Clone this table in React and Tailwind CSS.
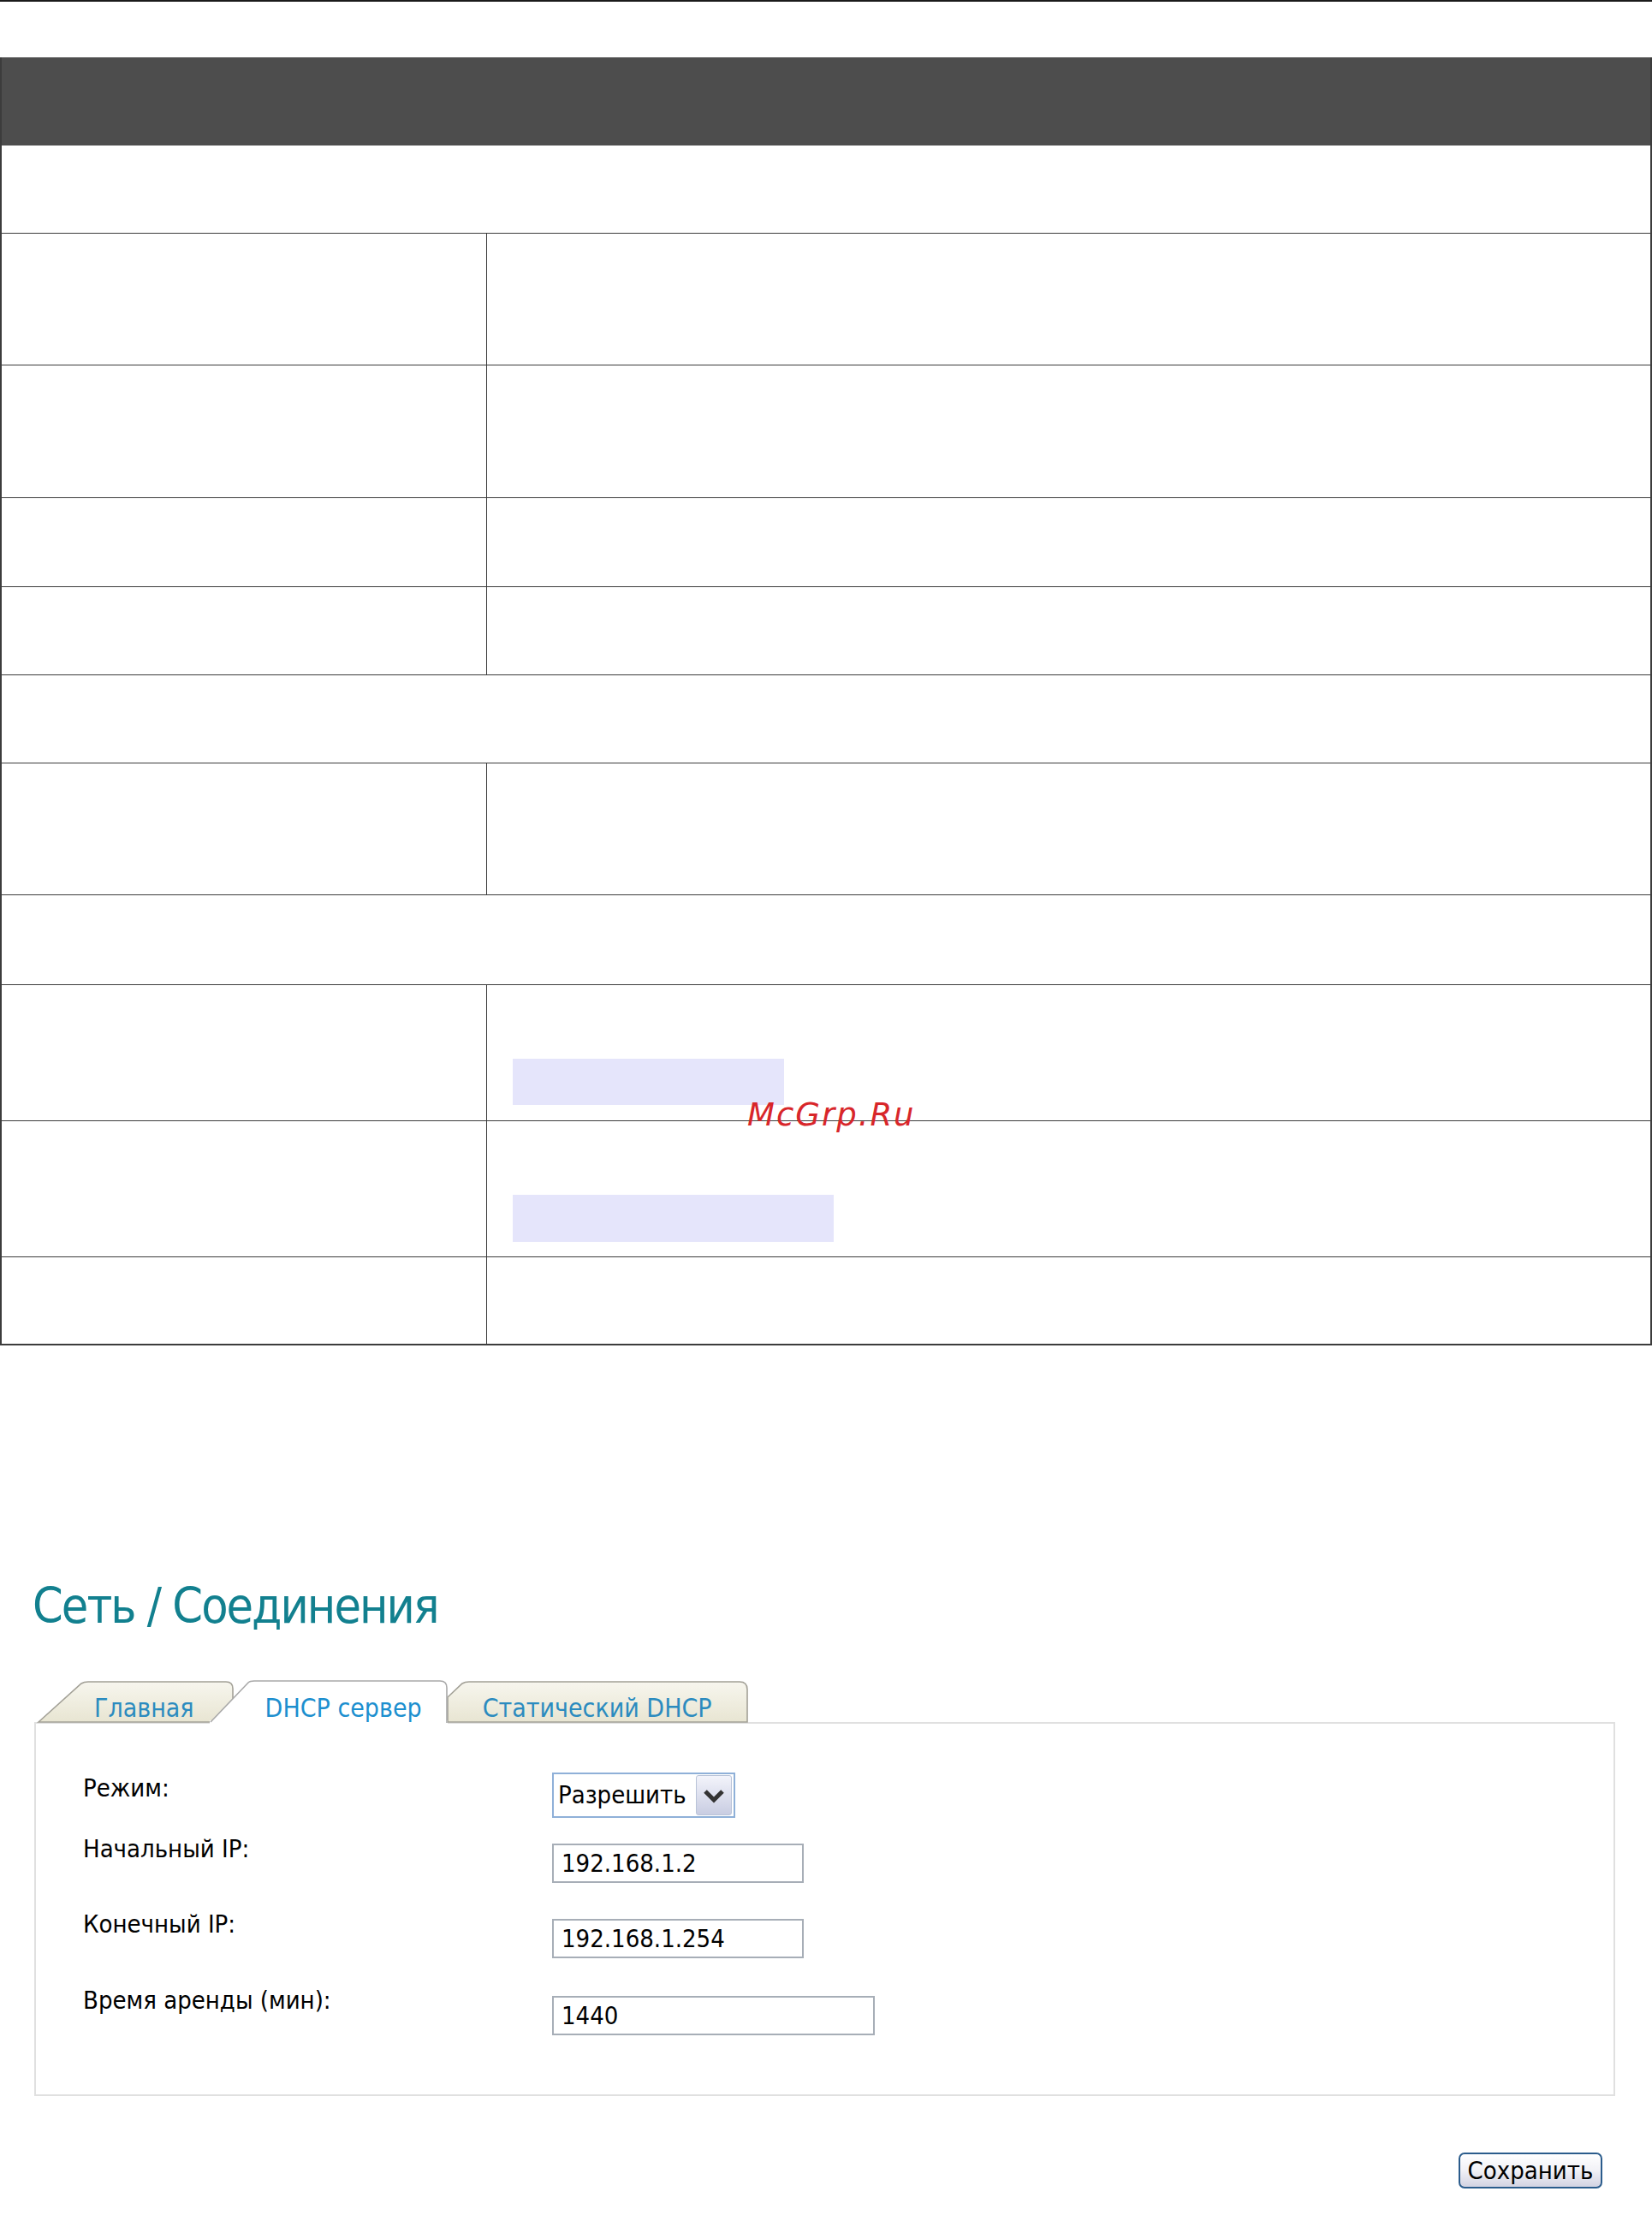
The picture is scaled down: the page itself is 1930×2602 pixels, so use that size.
import React from "react";

const F = { fontFamily: '"DejaVu Sans", "Liberation Sans", sans-serif' };

function Row({ h, split, children }) {
  return (
    <div className={`flex border-t border-[#3c3c3c] ${h}`}>
      {split ? (
        <>
          <div className="w-[567px] shrink-0 border-r border-[#3c3c3c]" />
          <div className="flex-1">{children}</div>
        </>
      ) : (
        <div className="flex-1">{children}</div>
      )}
    </div>
  );
}

function Tabs() {
  return (
    <div className="relative z-10 h-[49px] w-full">
      <svg className="absolute left-0 top-0 overflow-visible" width="900" height="52" viewBox="0 0 900 52">
        <defs>
          <linearGradient id="beige" x1="0" y1="0" x2="0" y2="1">
            <stop offset="0" stopColor="#f7f6ee" />
            <stop offset="1" stopColor="#e8e5d2" />
          </linearGradient>
        </defs>
        <path d="M45,49 L95,4 Q98,2 103,2 L264,2 Q272,2 272,10 L272,49 Z" fill="url(#beige)" stroke="#a3a197" strokeWidth="1.6" />
        <path d="M523,49 L523,20 L540,4 Q543,2 548,2 L864,2 Q873,2 873,11 L873,49 Z" fill="url(#beige)" stroke="#a3a197" strokeWidth="1.6" />
        <rect x="245" y="47" width="278" height="5" fill="#ffffff" />
        <path d="M246,49 L290,3 Q292,1 297,1 L514,1 Q522,1 522,9 L522,50" fill="#ffffff" stroke="#a9a9a9" strokeWidth="1.6" />
      </svg>
      <div className="relative flex h-full items-end pb-[1px] text-[30px] leading-none [font-stretch:condensed]" style={F}>
        <span className="ml-[110px] text-[#2b8bbf]">Главная</span>
        <span className="ml-[83px] text-[#1c8fcf]">DHCP сервер</span>
        <span className="ml-[71px] text-[#2b8bbf]">Статический DHCP</span>
      </div>
    </div>
  );
}

function Field({ children, w }) {
  return (
    <div className={`flex h-[46px] items-center border-2 border-[#a7aeb7] bg-white pl-[9px] text-[29px] text-black ${w}`}>
      {children}
    </div>
  );
}

export default function App() {
  return (
    <div className="relative h-[2602px] w-[1930px] overflow-hidden bg-white" style={F}>
      <div className="h-[2px] w-full bg-[#1a1a1a]" />

      <div className="mt-[65px] w-full border-x-2 border-b-2 border-[#3c3c3c]">
        <div className="h-[103px] bg-[#4d4d4d]" />
        <div className="h-[102px]" />
        <Row h="h-[154px]" split />
        <Row h="h-[155px]" split />
        <Row h="h-[104px]" split />
        <Row h="h-[103px]" split />
        <Row h="h-[103px]" />
        <Row h="h-[154px]" split />
        <Row h="h-[105px]" />
        <Row h="h-[159px]" split>
          <div className="ml-[30px] mt-[86px] h-[54px] w-[317px] bg-[#e5e5fb]" />
        </Row>
        <Row h="h-[159px]" split>
          <div className="ml-[30px] mt-[86px] h-[55px] w-[375px] bg-[#e5e5fb]" />
        </Row>
        <Row h="h-[102px]" split />
      </div>

      <div
        className="absolute left-[873px] top-[1284px] text-[37px] italic leading-none tracking-[2px] text-[#d8262a]"
        style={{ fontFamily: '"DejaVu Sans", sans-serif' }}
      >
        McGrp.Ru
      </div>

      <h1 className="ml-[38px] mt-[276px] h-[57px] text-[57px] font-normal leading-none tracking-[-2px] text-[#12808f] [font-stretch:condensed]">
        Сеть / Соединения
      </h1>

      <div className="mt-[58px]">
        <Tabs />
        <div className="ml-[40px] h-[437px] w-[1847px] border-2 border-[#e0e0e0] bg-white pl-[55px] pt-[57px] text-[29px] leading-none text-black [font-stretch:condensed]">
          <div className="flex h-[53px]">
            <div className="mt-[4px] w-[548px]">Режим:</div>
            <div className="flex h-[53px] w-[214px] items-center border-2 border-[#8fb0d8] bg-white">
              <span className="ml-[5px] flex-1">Разрешить</span>
              <div className="mr-[2px] flex h-[47px] w-[42px] items-center justify-center rounded-[3px] border border-[#b9c3d8] bg-gradient-to-b from-[#f3f4fb] to-[#c9cde2]">
                <svg width="28" height="18" viewBox="0 0 28 18">
                  <path d="M4,4 L14,14 L24,4" fill="none" stroke="#333333" strokeWidth="5" strokeLinejoin="miter" />
                </svg>
              </div>
            </div>
          </div>

          <div className="mt-[22px] flex h-[54px]">
            <div className="w-[548px]">Начальный IP:</div>
            <div className="mt-[8px]">
              <Field w="w-[294px]">192.168.1.2</Field>
            </div>
          </div>

          <div className="mt-[34px] flex h-[55px]">
            <div className="w-[548px]">Конечный IP:</div>
            <div className="mt-[8px]">
              <Field w="w-[294px]">192.168.1.254</Field>
            </div>
          </div>

          <div className="mt-[34px] flex h-[56px]">
            <div className="w-[548px]">Время аренды (мин):</div>
            <div className="mt-[9px]">
              <Field w="w-[377px]">1440</Field>
            </div>
          </div>
        </div>
      </div>

      <div className="mr-[58px] mt-[66px] flex justify-end">
        <button className="flex h-[42px] w-[168px] items-center justify-center rounded-[7px] border-2 border-[#2b5c8c] bg-gradient-to-b from-[#ffffff] via-[#f1f1f6] to-[#d3d3e2] text-[29px] leading-none text-black [font-stretch:condensed]">
          Сохранить
        </button>
      </div>
    </div>
  );
}
